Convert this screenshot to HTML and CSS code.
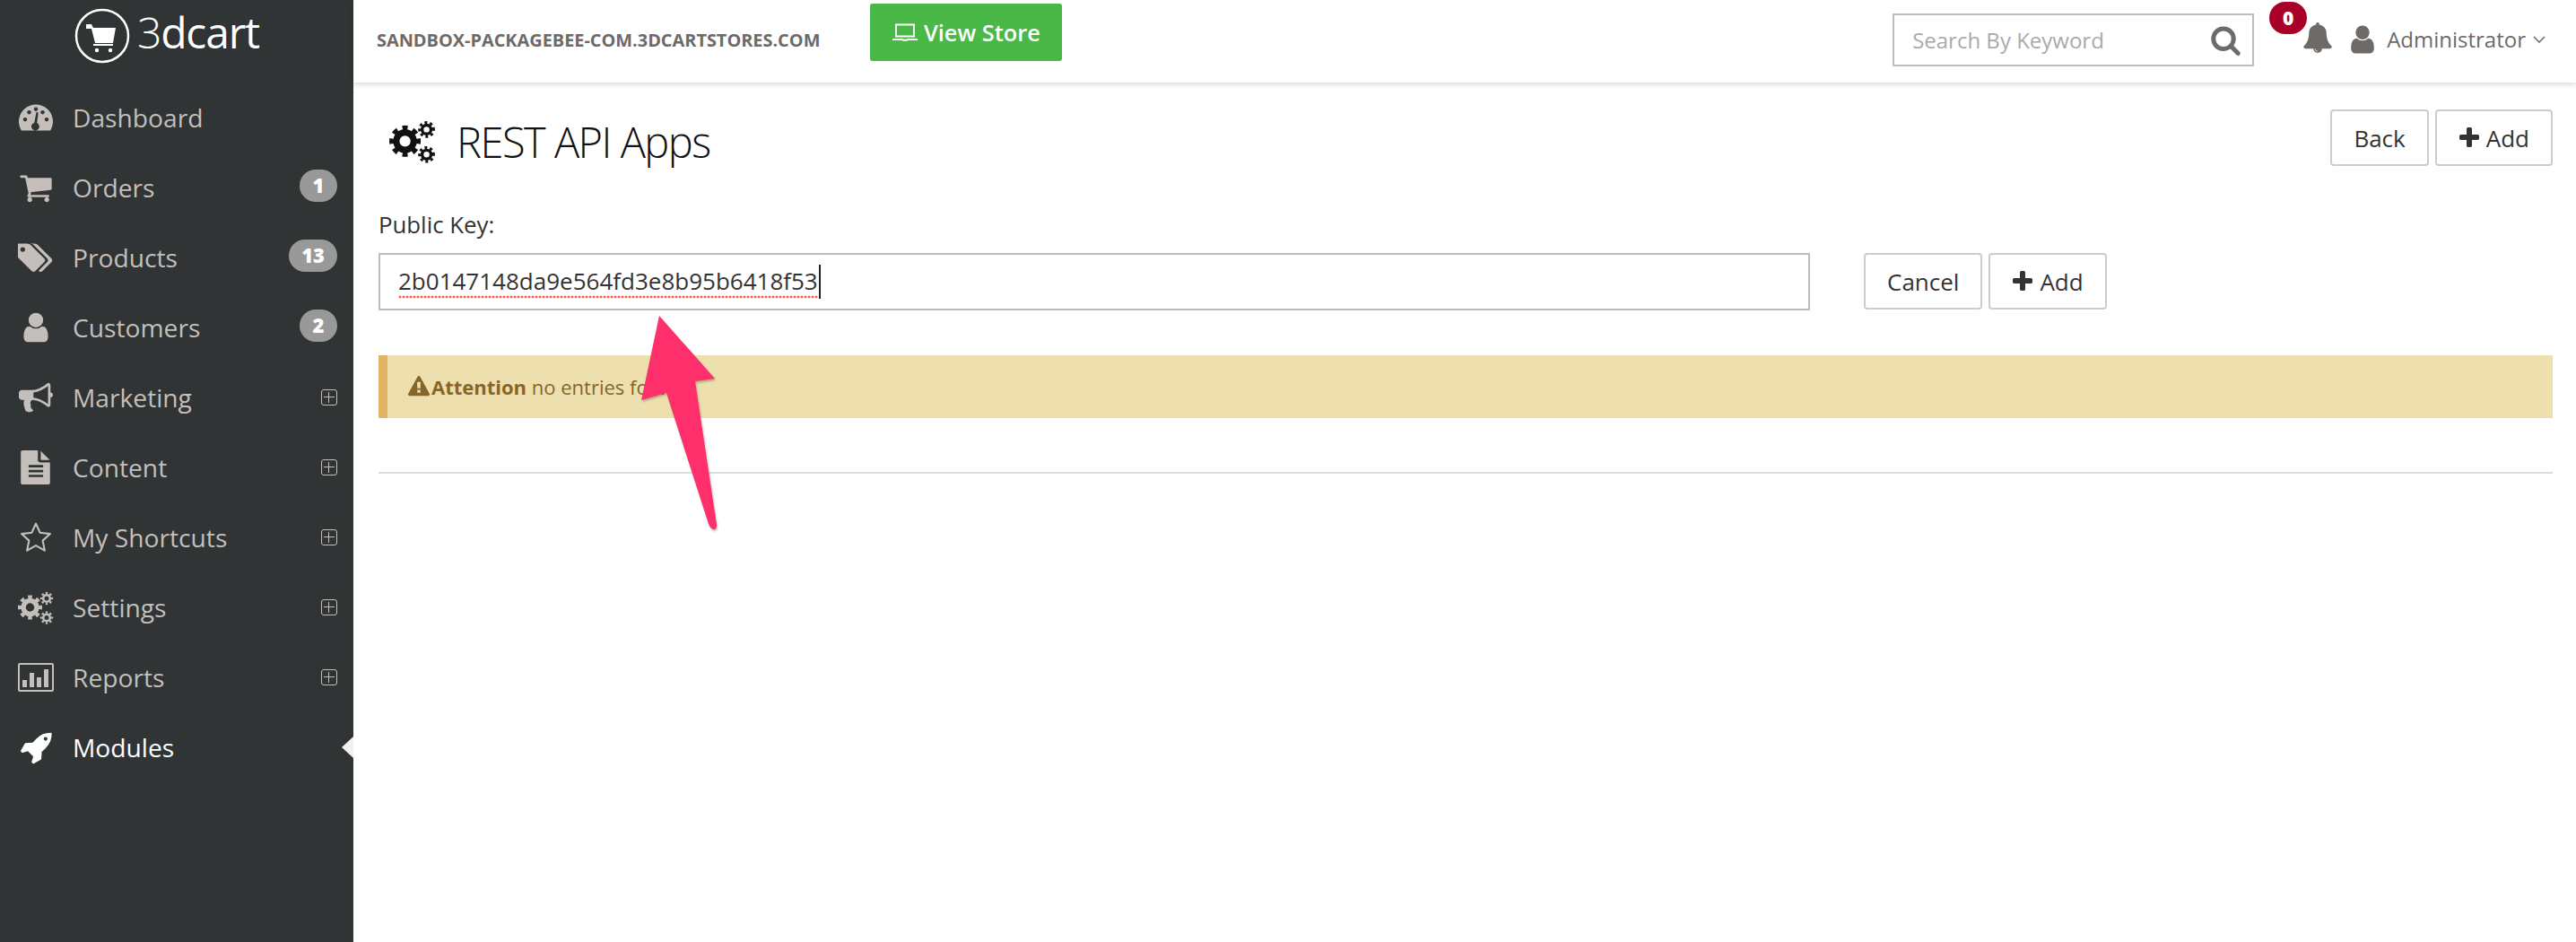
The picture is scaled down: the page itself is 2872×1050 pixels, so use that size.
FILE: index.html
```html
<!DOCTYPE html>
<html lang="en">
<head>
<meta charset="utf-8">
<title>REST API Apps</title>
<link rel="stylesheet" href="styles.css">
</head>
<body>
<svg class="defs" aria-hidden="true">
  <symbol id="i-cart" viewBox="0 0 1792 1792"><path d="M704 1536q0 52-38 90t-90 38-90-38-38-90 38-90 90-38 90 38 38 90zm896 0q0 52-38 90t-90 38-90-38-38-90 38-90 90-38 90 38 38 90zm128-1088v512q0 24-16.5 42.5t-40.5 21.5l-1044 122q13 60 13 70 0 16-24 64h920q26 0 45 19t19 45-19 45-45 19h-1024q-26 0-45-19t-19-45q0-11 8-31.5t16-36 21.5-40 15.5-29.5l-177-823h-204q-26 0-45-19t-19-45 19-45 45-19h256q16 0 28.5 6.5t19.5 15.5 13 24.5 8 26 5.5 29.5 4.5 26h1201q26 0 45 19t19 45z"/></symbol>
  <symbol id="i-tags" viewBox="0 0 1920 1792"><path d="M384 448q0-53-37.5-90.5t-90.5-37.5-90.5 37.5-37.5 90.5 37.5 90.5 90.5 37.5 90.5-37.5 37.5-90.5zm1067 576q0 53-37 90l-491 492q-39 37-91 37-53 0-90-37l-715-716q-38-37-64.5-101t-26.5-117v-416q0-52 38-90t90-38h416q53 0 117 26.5t102 64.5l715 714q37 39 37 91zm384 0q0 53-37 90l-491 492q-39 37-91 37-36 0-59-14t-53-45l470-470q37-37 37-90 0-52-37-91l-715-714q-38-38-102-64.5t-117-26.5h224q53 0 117 26.5t102 64.5l715 714q37 39 37 91z"/></symbol>
  <symbol id="i-user" viewBox="0 0 1792 1792"><path d="M1536 1399q0 109-62.5 187t-150.5 78h-854q-88 0-150.5-78t-62.5-187q0-85 8.5-160.5t31.5-152 58.5-131 94-89 134.5-34.5q131 128 313 128t313-128q76 0 134.5 34.5t94 89 58.5 131 31.5 152 8.5 160.5zm-256-887q0 159-112.5 271.5t-271.5 112.5-271.5-112.5-112.5-271.5 112.5-271.5 271.5-112.5 271.5 112.5 112.5 271.5z"/></symbol>
  <symbol id="i-horn" viewBox="0 0 1792 1792"><path d="M1664 640q53 0 90.5 37.5t37.5 90.5-37.5 90.5-90.5 37.5v384q0 52-38 90t-90 38q-417-347-812-380-58 19-91 66t-31 100.5 40 92.5q-20 33-23 65.5t6 58 33.5 55 48 50 61.5 50.5q-29 58-111.5 83t-168.5 11.5-132-55.5q-7-23-29.5-87.5t-32-94.5-23-89-15-101 3.5-98.5 22-110.5h-122q-66 0-113-47t-47-113v-192q0-66 47-113t113-47h480q435 0 896-384 52 0 90 38t38 90v384zm-128 604v-954q-394 302-768 343v270q377 42 768 341z"/></symbol>
  <symbol id="i-file" viewBox="0 0 1792 1792"><path d="M1596 476q14 14 28 36h-472v-472q22 14 36 28zm-476 164h520v1056q0 40-28 68t-68 28h-1344q-40 0-68-28t-28-68v-1600q0-40 28-68t68-28h800v520q0 40 28 68t68 28zm160 736v-64q0-14-9-23t-23-9h-704q-14 0-23 9t-9 23v64q0 14 9 23t23 9h704q14 0 23-9t9-23zm0-256v-64q0-14-9-23t-23-9h-704q-14 0-23 9t-9 23v64q0 14 9 23t23 9h704q14 0 23-9t9-23zm0-256v-64q0-14-9-23t-23-9h-704q-14 0-23 9t-9 23v64q0 14 9 23t23 9h704q14 0 23-9t9-23z"/></symbol>
  <symbol id="i-rocket" viewBox="0 0 1792 1792"><path d="M1504 448q0-40-28-68t-68-28-68 28-28 68 28 68 68 28 68-28 28-68zm224-288q0 249-75.5 430.5t-253.5 360.5q-81 80-195 176l-20 379q-2 16-16 26l-384 224q-7 4-16 4-12 0-23-9l-64-64q-13-14-8-32l85-276-281-281-276 85q-3 1-9 1-14 0-23-9l-64-64q-17-19-5-39l224-384q10-14 26-16l379-20q96-114 176-195 188-187 358-258t431-71q14 0 24 9.5t10 22.5z"/></symbol>
  <symbol id="i-search" viewBox="0 0 1792 1792"><path d="M1216 832q0-185-131.5-316.5t-316.5-131.5-316.5 131.5-131.5 316.5 131.5 316.5 316.5 131.5 316.5-131.5 131.5-316.5zm512 832q0 52-38 90t-90 38q-54 0-90-38l-343-342q-179 124-399 124-143 0-273.5-55.5t-225-150-150-225-55.5-273.5 55.5-273.5 150-225 225-150 273.5-55.5 273.5 55.5 225 150 150 225 55.5 273.5q0 220-124 399l343 343q37 37 37 90z"/></symbol>
  <symbol id="i-bell" viewBox="0 0 1792 1792"><path d="M912 1696q0-16-16-16-59 0-101.5-42.5t-42.5-101.5q0-16-16-16t-16 16q0 73 51.5 124.5t124.5 51.5q16 0 16-16zm816-288q0 52-38 90t-90 38h-448q0 106-75 181t-181 75-181-75-75-181h-448q-52 0-90-38t-38-90q50-42 91-88t85-119.5 74.5-158.5 50-206 19.5-260q0-152 117-282.5t307-158.5q-8-19-8-39 0-40 28-68t68-28 68 28 28 68q0 20-8 39 190 28 307 158.5t117 282.5q0 139 19.5 260t50 206 74.5 158.5 85 119.5 91 88z"/></symbol>
  <symbol id="i-plus" viewBox="0 0 1792 1792"><path d="M1600 736v192q0 40-28 68t-68 28h-416v416q0 40-28 68t-68 28h-192q-40 0-68-28t-28-68v-416h-416q-40 0-68-28t-28-68v-192q0-40 28-68t68-28h416v-416q0-40 28-68t68-28h192q40 0 68 28t28 68v416h416q40 0 68 28t28 68z"/></symbol>
  <symbol id="i-warn" viewBox="0 0 1792 1792"><path d="M1024 1375v-190q0-14-9.5-23.5t-22.5-9.5h-192q-13 0-22.5 9.5t-9.5 23.5v190q0 14 9.5 23.5t22.5 9.5h192q13 0 22.5-9.5t9.5-23.5zm-2-374l18-459q0-12-10-19-13-11-24-11h-220q-11 0-24 11-10 7-10 21l17 457q0 10 10 16.5t24 6.5h185q14 0 23.5-6.5t10.5-16.5zm-14-934l768 1408q35 63-2 126-17 29-46.5 46t-63.5 17h-1536q-34 0-63.5-17t-46.5-46q-37-63-2-126l768-1408q17-31 47-49t65-18 65 18 47 49z"/></symbol>
  <symbol id="i-gauge" viewBox="0 0 38 30"><path fill-rule="evenodd" d="M2.8 29.5A19 19 0 1 1 35.2 29.5ZM7 15a2.2 2.2 0 1 0 .01 0ZM11.5 7a2.2 2.2 0 1 0 .01 0ZM19 3.5a2.2 2.2 0 1 0 .01 0ZM26.5 7a2.2 2.2 0 1 0 .01 0ZM31 15a2.2 2.2 0 1 0 .01 0ZM19.5 9l2.2.4-1.4 11.7a4.4 4.4 0 1 1-3-.3Z"/></symbol>
  <symbol id="i-star" viewBox="0 0 34 34"><path fill="none" stroke="currentColor" stroke-width="2" stroke-linejoin="round" d="M17 2.5l4.4 9.6 10.6 1.2-7.8 7.1 2.1 10.4L17 25.6 7.700 30.800l2.100-10.400L2 13.300l10.600-1.200z"/></symbol>
  <symbol id="i-report" viewBox="0 0 40 32"><path fill-rule="evenodd" d="M2 0h36a2 2 0 0 1 2 2v28a2 2 0 0 1-2 2H2a2 2 0 0 1-2-2V2a2 2 0 0 1 2-2Zm0 2v28h36V2ZM5 19h5v8H5Zm8-8h5v16h-5Zm8 5h5v11h-5Zm8-9h5v20h-5Z"/></symbol>
  <symbol id="i-cogs" viewBox="0 0 40 37">
    <g fill="none" stroke="currentColor">
      <circle cx="13.500" cy="18" r="7.500" stroke-width="5.500"/>
      <circle cx="13.500" cy="18" r="11.500" stroke-width="4" pathLength="8" stroke-dasharray=".5 .5" stroke-dashoffset=".25"/>
      <circle cx="32" cy="8" r="3.800" stroke-width="2.600"/>
      <circle cx="32" cy="8" r="6" stroke-width="2.400" pathLength="8" stroke-dasharray=".5 .5" stroke-dashoffset=".25"/>
      <circle cx="32" cy="29.500" r="3.800" stroke-width="2.600"/>
      <circle cx="32" cy="29.500" r="6" stroke-width="2.400" pathLength="8" stroke-dasharray=".5 .5" stroke-dashoffset=".25"/>
    </g>
  </symbol>
</svg>

<div class="page">
  <aside class="sidebar">
    <div class="logo">
      <svg class="logo-mark" viewBox="0 0 64 64">
        <circle class="logo-ring" cx="32" cy="32" r="29"/>
        <path class="logo-cart" d="M14 19h6l2 4h25l-3 17H24L20 24h-6Z"/>
        <rect class="logo-cart" x="22" y="41" width="22" height="2"/>
        <circle class="logo-cart" cx="26" cy="48" r="2.200"/>
        <circle class="logo-cart" cx="41" cy="48" r="2.200"/>
      </svg>
      <span class="logo-text"><span class="logo-three">3</span>dcart</span>
    </div>
    <nav class="nav">
      <a class="nav-row"><span class="nav-ico"><svg class="ic-gauge"><use href="#i-gauge"/></svg></span><span class="nav-label">Dashboard</span></a>
      <a class="nav-row"><span class="nav-ico"><svg class="ic-cart"><use href="#i-cart"/></svg></span><span class="nav-label">Orders</span><span class="count">1</span></a>
      <a class="nav-row"><span class="nav-ico"><svg class="ic-tags"><use href="#i-tags"/></svg></span><span class="nav-label">Products</span><span class="count">13</span></a>
      <a class="nav-row"><span class="nav-ico"><svg class="ic-user"><use href="#i-user"/></svg></span><span class="nav-label">Customers</span><span class="count">2</span></a>
      <a class="nav-row"><span class="nav-ico"><svg class="ic-horn"><use href="#i-horn"/></svg></span><span class="nav-label">Marketing</span><span class="more"></span></a>
      <a class="nav-row"><span class="nav-ico"><svg class="ic-file"><use href="#i-file"/></svg></span><span class="nav-label">Content</span><span class="more"></span></a>
      <a class="nav-row"><span class="nav-ico"><svg class="ic-star"><use href="#i-star"/></svg></span><span class="nav-label">My Shortcuts</span><span class="more"></span></a>
      <a class="nav-row"><span class="nav-ico"><svg class="ic-cogs"><use href="#i-cogs"/></svg></span><span class="nav-label">Settings</span><span class="more"></span></a>
      <a class="nav-row"><span class="nav-ico"><svg class="ic-report"><use href="#i-report"/></svg></span><span class="nav-label">Reports</span><span class="more"></span></a>
      <a class="nav-row active"><span class="nav-ico"><svg class="ic-rocket"><use href="#i-rocket"/></svg></span><span class="nav-label">Modules</span></a>
    </nav>
  </aside>

  <div class="main">
    <header class="topbar">
      <span class="domain">SANDBOX-PACKAGEBEE-COM.3DCARTSTORES.COM</span>
      <a class="view-store">
        <svg class="laptop" viewBox="0 0 28 20"><path d="M4 1.500h20v13H4Z"/><path d="M0 18h11l1 .8h4l1-.8h11" /></svg>
        View Store
      </a>
      <div class="top-right">
        <div class="search">
          <span class="placeholder">Search By Keyword</span>
          <svg class="search-ico"><use href="#i-search"/></svg>
        </div>
        <div class="bell">
          <span class="bell-badge">0</span>
          <svg class="bell-ico"><use href="#i-bell"/></svg>
        </div>
        <svg class="admin-ico"><use href="#i-user"/></svg>
        <span class="admin">Administrator</span>
        <svg class="chev" viewBox="0 0 14 8"><path d="M1 1l6 6 6-6"/></svg>
      </div>
    </header>

    <main class="content">
      <div class="head">
        <h1 class="title"><svg class="title-ico"><use href="#i-cogs"/></svg>REST API Apps</h1>
        <div class="btns">
          <a class="btn">Back</a>
          <a class="btn"><svg class="plus"><use href="#i-plus"/></svg>Add</a>
        </div>
      </div>
      <label class="field-label">Public Key:</label>
      <div class="form-row">
        <div class="input"><span class="typed">2b0147148da9e564fd3e8b95b6418f53</span><span class="caret"></span></div>
        <div class="btns">
          <a class="btn">Cancel</a>
          <a class="btn"><svg class="plus"><use href="#i-plus"/></svg>Add</a>
        </div>
      </div>
      <div class="alert">
        <svg class="warn"><use href="#i-warn"/></svg>
        <span><strong>Attention</strong> no entries found</span>
      </div>
      <hr class="rule">
    </main>
  </div>
</div>

<svg class="arrow" viewBox="0 0 110 250">
  <path d="M35 2 97 72 75 75 99 235Q99 241 95 240 92 239 90 234L43 88 15 96Z"/>
</svg>
</body>
</html>
```

FILE: styles.css
```css
* { box-sizing: border-box; }
html, body { margin: 0; height: 100%; }
body {
  position: relative;
  font-family: "Open Sans", "Liberation Sans", sans-serif;
  color: #333;
  background: #fff;
  overflow: hidden;
}
.defs { position: absolute; width: 0; height: 0; }
svg { fill: currentColor; display: block; }

.page { display: flex; height: 1050px; }

/* Sidebar */
.sidebar { width: 394px; flex: none; background: #303435; color: #c4bfbb; }
.logo { height: 92px; display: flex; align-items: center; padding: 0 0 12px 82px; }
.logo-mark { width: 64px; height: 64px; flex: none; }
.logo-ring { fill: none; stroke: #fff; stroke-width: 2.500; }
.logo-cart { fill: #fff; }
.logo-text { margin: 0 0 8px 7px; font-size: 48px; font-weight: 500; line-height: 64px; letter-spacing: -1.200px; color: #fff; }
.logo-three { font-weight: 300; }

.nav-row { position: relative; display: flex; align-items: center; height: 78px; padding: 0 18px 0 20px; }
.nav-ico { width: 40px; display: flex; justify-content: center; flex: none; }
.nav-label { margin-left: 21px; font-size: 28.200px; flex: 1; }
.nav-row.active { color: #fff; }
.nav-row.active::after {
  content: "";
  position: absolute;
  right: 0;
  top: 27px;
  border: 12px solid transparent;
  border-right: 13px solid #f1f1f1;
  border-left: 0;
}
.ic-gauge { width: 38px; height: 30px; }
.ic-cart { width: 38px; height: 38px; }
.ic-tags { width: 42px; height: 39px; }
.ic-user { width: 38px; height: 38px; }
.ic-horn { width: 38px; height: 38px; }
.ic-file { width: 38px; height: 38px; }
.ic-star { width: 36px; height: 36px; }
.ic-cogs { width: 40px; height: 37px; }
.ic-report { width: 40px; height: 32px; }
.ic-rocket { width: 38px; height: 38px; }

.count {
  min-width: 42px;
  height: 36px;
  margin-bottom: 4px;
  padding: 0 14px;
  border-radius: 18px;
  background: #999;
  color: #fff;
  font-size: 22px;
  font-weight: 800;
  line-height: 35px;
  text-align: center;
}
.more {
  position: relative;
  width: 18px;
  height: 18px;
  border: 1.500px solid #c4bfbb;
  border-radius: 3px;
}
.more::before, .more::after { content: ""; position: absolute; background: #c4bfbb; }
.more::before { left: 2px; right: 2px; top: 6.500px; height: 1.500px; }
.more::after { top: 2px; bottom: 2px; left: 6.500px; width: 1.500px; }

/* Top bar */
.main { flex: 1; min-width: 0; display: flex; flex-direction: column; }
.topbar {
  height: 92px;
  flex: none;
  display: flex;
  align-items: center;
  padding: 0 34px 4px 26px;
  box-shadow: 0 2px 6px rgba(0, 0, 0, .16);
}
.domain { font-size: 19.900px; font-weight: 700; color: #6d6a68; }
.view-store {
  align-self: flex-start;
  margin: 4px 0 0 56px;
  height: 64px;
  width: 214px;
  display: flex;
  align-items: center;
  justify-content: center;
  gap: 7px;
  background: #4ab846;
  border-radius: 3px;
  color: #fff;
  font-size: 25.400px;
  font-weight: 600;
}
.laptop { width: 28px; height: 20px; fill: none; stroke: #fff; stroke-width: 2; }
.top-right { margin-left: auto; display: flex; align-items: center; color: #6d6a68; }
.search {
  width: 403px;
  height: 59px;
  border: 2px solid #bdbdbd;
  display: flex;
  align-items: center;
  justify-content: space-between;
  padding: 0 12px 0 20px;
}
.placeholder { color: #aaa; font-size: 24px; }
.search-ico { width: 35px; height: 35px; color: #6d6a68; }
.bell { position: relative; width: 34px; height: 34px; margin: 0 0 4px 54px; }
.bell-ico { width: 34px; height: 34px; }
.bell-badge {
  position: absolute;
  left: -37px;
  top: -23px;
  width: 42px;
  height: 36px;
  border-radius: 18px;
  background: #a80029;
  color: #fff;
  font-size: 21px;
  font-weight: 800;
  line-height: 36px;
  text-align: center;
}
.admin-ico { width: 36px; height: 36px; margin-left: 15px; }
.admin { margin: 0 0 2px 9px; font-size: 24px; }
.chev { width: 14px; height: 8px; margin-left: 8px; fill: none; stroke: #6d6a68; stroke-width: 1.500; }

/* Content */
.content { padding: 30px 26px 0 28px; }
.head { display: flex; justify-content: space-between; align-items: flex-start; height: 98px; }
.title {
  margin: 4px 0 0;
  display: flex;
  align-items: center;
  height: 63px;
  font-size: 47px;
  font-weight: 300;
  letter-spacing: -1.500px;
  color: #111;
}
.title-ico { width: 52px; height: 48px; margin: 1px 23px 0 12px; color: #111; }
.btns { display: flex; gap: 7px; }
.btn {
  height: 63px;
  display: flex;
  align-items: center;
  padding: 0 24px;
  border: 2px solid #ccc;
  border-radius: 4px;
  font-size: 26px;
  color: #333;
  background: #fff;
}
.plus { width: 28px; height: 28px; margin: 0 5px 0 -2px; color: #333; }
.field-label { display: block; font-size: 25.800px; line-height: 34px; height: 49px; color: #333; margin-top: 13px; }
.form-row { display: flex; gap: 60px; }
.input {
  width: 1596px;
  height: 64px;
  border: 2px solid #bbb;
  display: flex;
  align-items: center;
  padding-left: 20px;
  font-size: 26px;
  color: #333;
}
.typed {
  line-height: 36px;
  padding-bottom: 2px;
  background: radial-gradient(circle, #ff5c52 1.300px, transparent 1.700px) left bottom / 4px 4px repeat-x;
}
.caret { width: 2px; height: 38px; background: #222; margin-left: 1px; }
.alert {
  margin-top: 50px;
  height: 70px;
  display: flex;
  align-items: center;
  padding-left: 23px;
  background: #eee0ae;
  border-left: 10px solid #e0b565;
  color: #85662a;
  font-size: 22px;
}
.warn { width: 24px; height: 24px; margin-right: 2px; }
.rule { margin: 60px 0 0; border: 0; border-top: 2px solid #ddd; }

/* Annotation arrow over the page */
.arrow {
  position: absolute;
  left: 700px;
  top: 350px;
  width: 110px;
  height: 250px;
  fill: #ff2f6c;
  filter: drop-shadow(1px 2px 1px rgba(0, 0, 0, .25));
}
```
